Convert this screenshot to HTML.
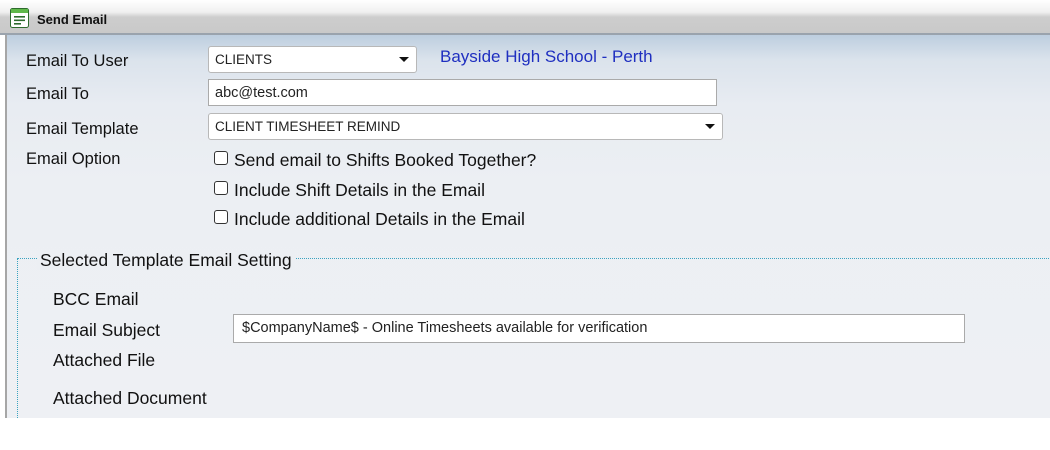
<!DOCTYPE html>
<html><head><style>
*{margin:0;padding:0;box-sizing:border-box}
body{width:1050px;height:450px;background:#fff;position:relative;overflow:hidden;font-family:"Liberation Sans",sans-serif;color:#111}
.title{position:absolute;left:0;top:0;width:1050px;height:35px;background:linear-gradient(#fff 0,#f0f0f0 12px,#cdcdcd 17px,#c9c9c9 33px);border-bottom:2px solid #9aa3ad}
.title span{position:absolute;left:37px;top:12px;font-size:13px;font-weight:bold;color:#111}
.panel{position:absolute;left:5px;top:35px;width:1045px;height:383px;border-left:2px solid #a6a6a6;background:linear-gradient(#bdcedf 0,#dbe3ec 25px,#e8ecf2 70px,#eceff3 150px,#eef0f4 383px)}
.l{position:absolute;font-size:16.5px;line-height:20px;white-space:nowrap}
.b{font-size:17.5px}
.box{position:absolute;background:#fff;border:1px solid #aaa;font-size:13.5px;line-height:26px;padding-left:6px;color:#222}
.dd{border-radius:3px;border-color:#b8b8b8}
.dd:after{content:"";position:absolute;right:7px;top:10px;border:5px solid transparent;border-top:5px solid #111;border-bottom:0}
.cb{position:absolute;width:14px;height:14px;border:1px solid #333;border-radius:3px;background:#fff}
.fs{position:absolute;left:17px;top:258px;width:1040px;height:170px;border-top:1px dotted #3aa3c0;border-left:1px dotted #3aa3c0}
</style></head><body>
<div class="title">
<svg style="position:absolute;left:10px;top:8px" width="19" height="20" viewBox="0 0 19 20"><rect x="0.5" y="0.5" width="18" height="19" rx="2" fill="#fff" stroke="#2d6b2d"/><rect x="1" y="1" width="17" height="4" fill="#5fb84a"/><rect x="4" y="8" width="11" height="1.6" fill="#2d6b2d"/><rect x="4" y="11.5" width="11" height="1.6" fill="#2d6b2d"/><rect x="4" y="15" width="7" height="1.6" fill="#2d6b2d"/></svg>
<span>Send Email</span></div>
<div class="panel"></div>
<div class="l" style="left:26px;top:51px">Email To User</div>
<div class="l" style="left:26px;top:84px">Email To</div>
<div class="l" style="left:26px;top:119px">Email Template</div>
<div class="l" style="left:26px;top:149px">Email Option</div>
<div class="box dd" style="left:208px;top:46px;width:209px;height:27px">CLIENTS</div>
<div class="l" style="left:440px;top:47px;color:#1f2fc0;font-size:17px">Bayside High School - Perth</div>
<div class="box" style="left:208px;top:79px;width:509px;height:27px;font-size:14.5px">abc@test.com</div>
<div class="box dd" style="left:208px;top:113px;width:515px;height:27px">CLIENT TIMESHEET REMIND</div>
<div class="cb" style="left:214px;top:151px"></div><div class="l b" style="left:234px;top:150px">Send email to Shifts Booked Together?</div>
<div class="cb" style="left:214px;top:181px"></div><div class="l b" style="left:234px;top:180px">Include Shift Details in the Email</div>
<div class="cb" style="left:214px;top:210px"></div><div class="l b" style="left:234px;top:209px">Include additional Details in the Email</div>
<div class="fs"></div>
<div class="l b" style="left:37px;top:250px;background:#eceff3;padding:0 3px">Selected Template Email Setting</div>
<div class="l b" style="left:53px;top:289px">BCC Email</div>
<div class="l b" style="left:53px;top:320px">Email Subject</div>
<div class="l b" style="left:53px;top:350px">Attached File</div>
<div class="l b" style="left:53px;top:388px">Attached Document</div>
<div class="box" style="left:233px;top:314px;width:732px;height:29px;line-height:27px;font-size:14.5px;padding-left:8px">$CompanyName$ - Online Timesheets available for verification</div>
<div style="position:absolute;left:0;top:418px;width:1050px;height:32px;background:#fff"></div>
</body></html>
